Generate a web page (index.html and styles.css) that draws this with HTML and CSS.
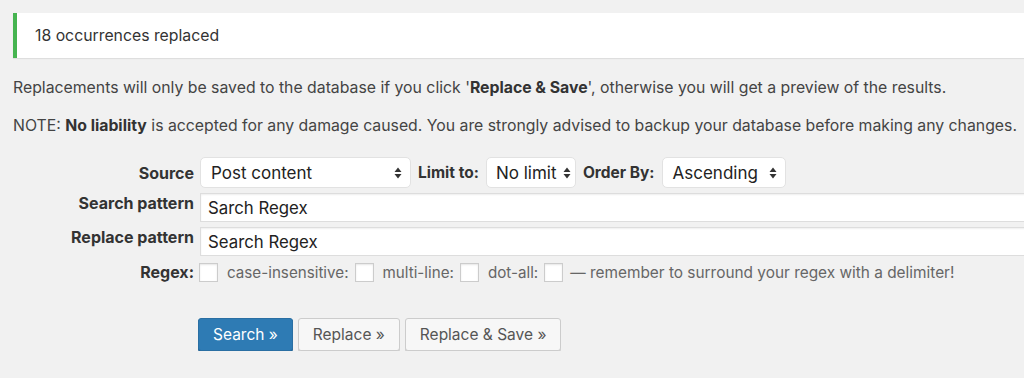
FILE: index.html
```html
<!DOCTYPE html>
<html lang="en">

<head>
    <meta charset="UTF-8">
    <meta name="viewport" content="width=device-width, initial-scale=1.0">
    <title>Search Regex</title>
    <link rel="stylesheet" href="styles.css">
</head>

<body>
    <div class="wrap">
        <div class="notice">18 occurrences replaced</div>

        <p class="info">Replacements will only be saved to the database if you click '<b>Replace &amp; Save</b>', otherwise you will get a preview of the results.</p>
        <p class="info">NOTE: <b>No liability</b> is accepted for any damage caused. You are strongly advised to backup your database before making any changes.</p>

        <div class="form">
            <div class="row">
                <div class="label">Source</div>
                <div class="field inline">
                    <div class="select w-source">Post content <svg class="arrows" width="8" height="12" viewBox="0 0 8 12"><path d="M4 0.5 L7.5 5 H0.5 Z M4 11.5 L7.5 7 H0.5 Z" fill="#333"/></svg></div>
                    <span class="sublabel">Limit to:</span>
                    <div class="select w-limit">No limit <svg class="arrows" width="8" height="12" viewBox="0 0 8 12"><path d="M4 0.5 L7.5 5 H0.5 Z M4 11.5 L7.5 7 H0.5 Z" fill="#333"/></svg></div>
                    <span class="sublabel">Order By:</span>
                    <div class="select w-order">Ascending <svg class="arrows" width="8" height="12" viewBox="0 0 8 12"><path d="M4 0.5 L7.5 5 H0.5 Z M4 11.5 L7.5 7 H0.5 Z" fill="#333"/></svg></div>
                </div>
            </div>
            <div class="row">
                <div class="label top">Search pattern</div>
                <div class="field"><input class="text" type="text" value="Sarch Regex"></div>
            </div>
            <div class="row">
                <div class="label top">Replace pattern</div>
                <div class="field"><input class="text" type="text" value="Search Regex"></div>
            </div>
            <div class="row">
                <div class="label">Regex:</div>
                <div class="field inline opts">
                    <span class="check"></span>
                    <span class="opt">case-insensitive:</span>
                    <span class="check"></span>
                    <span class="opt">multi-line:</span>
                    <span class="check"></span>
                    <span class="opt">dot-all:</span>
                    <span class="check"></span>
                    <span class="hint">— remember to surround your regex with a delimiter!</span>
                </div>
            </div>
        </div>

        <div class="actions">
            <button class="btn primary">Search »</button>
            <button class="btn">Replace »</button>
            <button class="btn">Replace &amp; Save »</button>
        </div>
    </div>
</body>
</html>
```

FILE: styles.css
```css
* {
    margin: 0;
    box-sizing: border-box;
    padding: 0;
}

body {
    background: #f1f1f1;
    color: #444;
    font-family: Inter, "Liberation Sans", sans-serif;
    font-size: 15.8px;
    overflow: hidden;
}

.wrap {
    padding: 13px 0 0 13px;
    width: 1100px;
}

.notice {
    height: 45px;
    padding: 0 0 0 18px;
    line-height: 45px;
    background: #fff;
    border-left: 4px solid #46b450;
    box-shadow: 0 1px 1px rgba(0, 0, 0, 0.08);
    color: #333;
}

.info {
    margin-top: 20px;
    line-height: 20px;
}

.info + .info {
    margin-top: 18px;
}

.info b {
    color: #333;
}

.form {
    margin-top: 21px;
}

.row {
    display: flex;
    margin-bottom: 5px;
}

.label {
    width: 182px;
    padding-right: 1px;
    display: flex;
    align-items: center;
    justify-content: flex-end;
    font-size: 16px;
    font-weight: 700;
    color: #333;
    white-space: nowrap;
}

.label.top {
    align-items: flex-start;
    padding-top: 0;
    line-height: 20px;
}

.field {
    flex: 1;
    padding-left: 5px;
}

.inline {
    display: flex;
    align-items: center;
}

.select {
    height: 31px;
    display: flex;
    align-items: center;
    justify-content: space-between;
    padding: 0 8px 0 10px;
    background: #fff;
    border: 1px solid #e2e2e2;
    border-radius: 5px;
    font-size: 17px;
    color: #222;
    white-space: nowrap;
}

.arrows {
    flex: none;
}

.w-source {
    width: 211px;
}

.w-limit {
    width: 90px;
    padding-right: 4px;
    padding-left: 9px;
}

.w-order {
    width: 124px;
}

.sublabel {
    padding: 0 7px;
    font-size: 15.5px;
    font-weight: 700;
    color: #333;
    white-space: nowrap;
}

.text {
    display: block;
    width: 900px;
    height: 29px;
    padding: 0 7px;
    border: 1px solid #ddd;
    border-right: none;
    background: #fff;
    font-family: inherit;
    font-size: 16.8px;
    color: #222;
    box-shadow: inset 0 1px 2px rgba(0, 0, 0, 0.07);
}

.opts {
    color: #666;
    font-size: 15.2px;
    padding-left: 4px;
    padding-top: 2px;
    white-space: nowrap;
}

.check {
    flex: none;
    width: 19px;
    height: 19px;
    background: #fff;
    border: 1px solid #ccc;
    box-shadow: inset 0 1px 2px rgba(0, 0, 0, 0.1);
    margin-right: 9px;
}

.opt {
    margin-right: 6px;
}

.hint {
    margin-left: -2px;
    font-size: 15.4px;
}

.actions {
    display: flex;
    gap: 5px;
    margin: 36px 0 0 185px;
}

.btn {
    height: 33px;
    padding: 0 14px;
    background: #f7f7f7;
    border: 1px solid #ccc;
    border-radius: 3px;
    box-shadow: 0 1px 0 #ccc;
    font-family: inherit;
    font-size: 15.5px;
    color: #555;
}

.btn.primary {
    background: #2e7bb4;
    border-color: #2a6fa3;
    box-shadow: 0 1px 0 #1f5f8f;
    color: #fff;
}
```
